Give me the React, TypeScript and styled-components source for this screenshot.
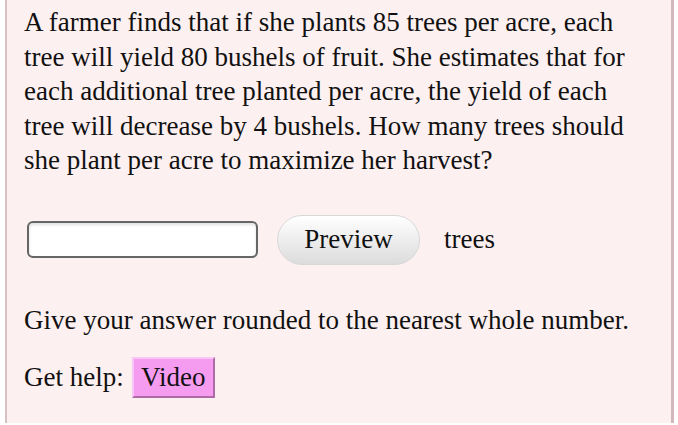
import styled, { createGlobalStyle } from "styled-components";

const GlobalStyle = createGlobalStyle`
    html, body {
        margin: 0;
        padding: 0;
        background: #ffffff;
    }
    body {
        font-family: "Liberation Serif", "Times New Roman", serif;
        color: #111111;
    }
`;

const questionLines: string[] = [
    "A farmer finds that if she plants 85 trees per acre, each",
    "tree will yield 80 bushels of fruit. She estimates that for",
    "each additional tree planted per acre, the yield of each",
    "tree will decrease by 4 bushels. How many trees should",
    "she plant per acre to maximize her harvest?",
];

const App = () => {
    return (
        <>
            <GlobalStyle />
            <Frame>
                <Question>
                    {questionLines.map((line) => (
                        <Line key={line}>{line}</Line>
                    ))}
                </Question>
                <AnswerRow>
                    <AnswerInput type="text" />
                    <PreviewButton>Preview</PreviewButton>
                    <Unit>trees</Unit>
                </AnswerRow>
                <Note>Give your answer rounded to the nearest whole number.</Note>
                <HelpRow>
                    <span>Get help:</span>
                    <VideoButton>Video</VideoButton>
                </HelpRow>
            </Frame>
        </>
    );
};

export default App;

const Frame = styled.div`
    margin: 0 4px 0 5px;
    height: 423px;
    box-sizing: border-box;
    background: #fdf0f0;
    border-left: 2px solid #d6c0c4;
    border-right: 3px solid #d2b8bd;
    padding: 5px 18px 0 17px;
    font-size: 27px;
`;

const Question = styled.div`
    margin: 0;
    line-height: 34.5px;
`;

const Line = styled.div`
    white-space: nowrap;
`;

const AnswerRow = styled.div`
    display: flex;
    flex-direction: row;
    align-items: center;
    margin-top: 37px;
    height: 50px;
`;

const AnswerInput = styled.input`
    box-sizing: border-box;
    width: 231px;
    height: 37px;
    margin-left: 3px;
    border: 2px solid #666666;
    border-radius: 6px;
    background: #ffffff;
    box-shadow: inset 0 2px 3px rgba(0, 0, 0, 0.12);
    outline: none;
`;

const PreviewButton = styled.button`
    box-sizing: border-box;
    width: 143px;
    height: 50px;
    margin-left: 19px;
    border: 1px solid #d8d8d8;
    border-radius: 25px;
    background: linear-gradient(#ffffff, #dcdcdc);
    font-family: "Liberation Serif", "Times New Roman", serif;
    font-size: 27px;
    color: #111111;
    padding: 0;
`;

const Unit = styled.span`
    margin-left: 24px;
`;

const Note = styled.p`
    margin: 38px 0 0;
    line-height: 34px;
`;

const HelpRow = styled.div`
    display: flex;
    flex-direction: row;
    align-items: center;
    gap: 8px;
    margin-top: 20px;
`;

const VideoButton = styled.button`
    box-sizing: border-box;
    height: 41px;
    width: 83px;
    padding: 0;
    background: #f69cf0;
    border: 2px solid;
    border-color: #f8c6f4 #b06aa8 #b06aa8 #f8c6f4;
    font-family: "Liberation Serif", "Times New Roman", serif;
    font-size: 27px;
    color: #111111;
`;
